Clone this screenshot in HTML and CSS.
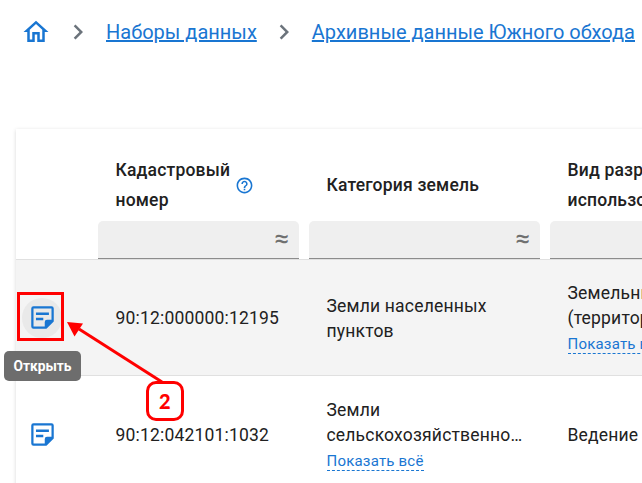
FILE: index.html
```html
<!DOCTYPE html>
<html lang="ru">
<head>
<meta charset="utf-8">
<title>Архивные данные Южного обхода</title>
<link rel="stylesheet" href="styles.css">
</head>
<body>
<svg class="defs" aria-hidden="true">
  <symbol id="chevron" viewBox="0 0 24 24"><path d="M10 6 8.59 7.41 13.17 12l-4.58 4.59L10 18l6-6z"/></symbol>
  <symbol id="note" viewBox="0 0 24 24"><path fill-rule="evenodd" d="M4 2H20a2 2 0 0 1 2 2V15.500L15.500 22H4a2 2 0 0 1-2-2V4a2 2 0 0 1 2-2ZM4 4V20H14V16a2 2 0 0 1 2-2H20V4ZM6.200 7.600H17.700V9.800H6.200ZM6.200 12.200H12.700V14.400H6.200Z"/></symbol>
</svg>
<nav class="crumbs">
  <svg class="home" viewBox="0 0 24 24"><path d="m12 5.69 5 4.5V18h-2v-6H9v6H7v-7.81l5-4.5M12 3 2 12h3v8h6v-6h2v6h6v-8h3L12 3z"/></svg>
  <svg class="chevron"><use href="#chevron"/></svg>
  <a class="crumb">Наборы данных</a>
  <svg class="chevron"><use href="#chevron"/></svg>
  <a class="crumb">Архивные данные Южного обхода</a>
</nav>
<main class="table">
  <div class="row head">
    <div></div>
    <div class="head-cell">
      <div class="title">Кадастровый<br>номер
        <svg class="help" viewBox="0 0 24 24"><path d="M11 18h2v-2h-2v2zm1-16C6.480 2 2 6.480 2 12s4.480 10 10 10 10-4.480 10-10S17.520 2 12 2zm0 18c-4.410 0-8-3.590-8-8s3.590-8 8-8 8 3.590 8 8-3.590 8-8 8zm0-14c-2.210 0-4 1.790-4 4h2c0-1.100.900-2 2-2s2 .900 2 2c0 2-3 1.750-3 5h2c0-2.250 3-2.500 3-5 0-2.210-1.790-4-4-4z"/></svg>
      </div>
      <div class="filter"><span>≈</span></div>
    </div>
    <div class="head-cell">
      <div class="title single">Категория земель</div>
      <div class="filter"><span>≈</span></div>
    </div>
    <div class="head-cell">
      <div class="title">Вид разрешенного<br>использования</div>
      <div class="filter"></div>
    </div>
  </div>
  <div class="row hovered">
    <div class="action">
      <button class="open active"><svg><use href="#note"/></svg></button>
      <div class="tooltip">Открыть</div>
      <svg class="arrow" viewBox="0 0 110 66"><path class="shaft" d="M12 7 95 60"/><path d="M0 0 16 1.500 7.500 14.500z"/></svg>
      <div class="step">2</div>
    </div>
    <div class="cell plain">90:12:000000:12195</div>
    <div class="cell plain">Земли населенных<br>пунктов</div>
    <div class="cell">Земельные участки<br>(территории)<a class="more">Показать всё</a></div>
  </div>
  <div class="row">
    <div class="action"><button class="open"><svg><use href="#note"/></svg></button></div>
    <div class="cell plain">90:12:042101:1032</div>
    <div class="cell">Земли<br>сельскохозяйственно…<a class="more">Показать всё</a></div>
    <div class="cell plain">Ведение</div>
  </div>
</main>
</body>
</html>
```
FILE: styles.css
```css
*, *::after { box-sizing: border-box; }
body {
  margin: 0;
  width: 642px;
  height: 483px;
  overflow: hidden;
  background: #fff;
  color: #212121;
  font-family: Roboto, sans-serif;
  font-size: 17.5px;
  letter-spacing: 0.01071em;
  line-height: 25px;
}
.defs { position: absolute; width: 0; height: 0; }
svg { fill: #1976d2; flex: none; }

.crumbs {
  display: flex;
  align-items: center;
  height: 64px;
  padding-left: 21px;
  margin-bottom: 65px;
  white-space: nowrap;
}
.home { width: 30px; height: 30px; }
.chevron { width: 30px; height: 30px; margin: 0 13px 0 12px; fill: #6b737b; }
.crumb {
  color: #1976d2;
  font-size: 20px;
  letter-spacing: 0;
  line-height: 30px;
  text-decoration: underline;
}

.table {
  width: 800px;
  margin-left: 16px;
  box-shadow: 0 1px 4px rgba(0, 0, 0, .16);
}
.row {
  display: grid;
  grid-template-columns: 82px 211px 241px 266px;
  height: 116px;
  border-bottom: 1px solid #e0e0e0;
  background: #fff;
}
.row:last-child { height: 118px; }
.hovered { background: #f4f4f4; }
.head { height: 131px; }
.head-cell {
  display: flex;
  flex-direction: column;
  padding: 19px 10px 0 0;
}
.title {
  position: relative;
  display: flow-root;
  align-content: center;
  height: 73px;
  padding-left: 17.5px;
  font-weight: 500;
  line-height: 30px;
  white-space: nowrap;
}
.single { padding-top: 1px; }
.help { position: absolute; left: 137px; top: 28px; width: 19px; height: 19px; }
.filter {
  display: flex;
  align-items: center;
  justify-content: flex-end;
  height: 38px;
  padding-right: 10px;
  border-bottom: 1px solid #8c8c8c;
  border-radius: 5px 5px 0 0;
  background: #efefef;
  color: #707070;
  font: 600 25px/32px "Open Sans", sans-serif;
}
.filter span { padding-bottom: 4px; }
.cell { align-self: center; padding-left: 17.5px; white-space: nowrap; }
.plain { padding-top: 2px; }
.more {
  display: block;
  width: max-content;
  height: 20px;
  margin-top: 3px;
  border-bottom: 1px dashed #1976d2;
  color: #1976d2;
  font-size: 15px;
  letter-spacing: .2px;
  line-height: 20px;
}

.action { position: relative; display: flex; align-items: center; padding-left: 6px; }
.open {
  display: grid;
  place-items: center;
  width: 40px;
  height: 40px;
  padding: 0;
  border: 0;
  border-radius: 50%;
  background: none;
}
.open svg { width: 27px; height: 27px; }
.active { background: #e9e9e9; }
.active::after {
  content: "";
  position: absolute;
  left: 1px;
  top: 32px;
  width: 47px;
  height: 49px;
  border: 3px solid #f00;
}
.tooltip {
  position: absolute;
  left: -12px;
  top: 91px;
  width: 77px;
  height: 30px;
  border-radius: 5px;
  background: #6d6d6d;
  color: #fff;
  font-size: 13.75px;
  font-weight: 700;
  letter-spacing: 0;
  line-height: 30px;
  text-align: center;
}
.arrow {
  position: absolute;
  left: 51px;
  top: 62px;
  width: 110px;
  height: 66px;
  fill: #f00;
}
.shaft { stroke: #f00; stroke-width: 3; }
.step {
  position: absolute;
  left: 130px;
  top: 121px;
  width: 38px;
  height: 40px;
  border: 3px solid #f00;
  border-radius: 10px;
  background: #fff;
  color: #f00;
  font: 900 20px/34px Lato, sans-serif;
  text-align: center;
}
```
